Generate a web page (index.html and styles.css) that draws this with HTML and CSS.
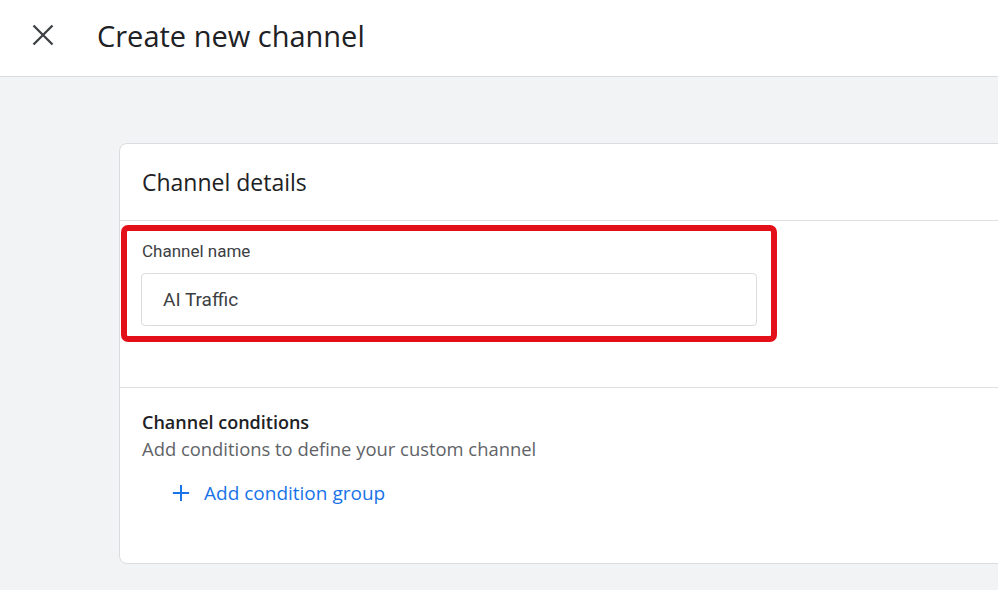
FILE: index.html
```html
<!DOCTYPE html>
<html lang="en">
<head>
    <meta charset="UTF-8">
    <meta name="viewport" content="width=device-width, initial-scale=1.0">
    <title>Create new channel</title>
    <link rel="stylesheet" href="styles.css">
</head>
<body>
    <header class="topbar">
        <button class="close-btn" aria-label="Close">
            <svg width="24" height="24" viewBox="0 0 24 24"><path d="M2.5 2.5 21.5 21.5M21.5 2.5 2.5 21.5" stroke="#3c4043" stroke-width="2.3" fill="none"/></svg>
        </button>
        <h1 class="title">Create new channel</h1>
    </header>

    <main class="content">
        <section class="card">
            <div class="card-header">Channel details</div>

            <div class="field-block">
                <div class="highlight">
                    <label for="channel-name" class="field-label">Channel name</label>
                    <div class="input-box">
                        <input type="text" id="channel-name" value="AI Traffic">
                    </div>
                </div>
            </div>

            <div class="conditions">
                <div class="cond-title">Channel conditions</div>
                <div class="cond-sub">Add conditions to define your custom channel</div>
                <button class="add-group">
                    <svg width="20" height="20" viewBox="0 0 20 20"><path d="M10 1v18M1 10h18" stroke="#1a73e8" stroke-width="2.2" fill="none"/></svg>
                    <span>Add condition group</span>
                </button>
            </div>
        </section>
    </main>
</body>
</html>
```

FILE: styles.css
```css
body {
    margin: 0;
    background-color: #f1f3f4;
    font-family: 'Roboto', 'Liberation Sans', sans-serif;
    overflow: hidden;
}

.topbar {
    height: 76px;
    background-color: #fff;
    border-bottom: 1px solid #dadce0;
    display: flex;
    align-items: center;
}

.close-btn {
    border: none;
    background: none;
    padding: 0;
    margin-left: 31px;
    margin-top: -6px;
    width: 24px;
    height: 24px;
    display: flex;
}

.close-btn svg {
    width: 24px;
    height: 24px;
}

.title {
    margin: -6px 0 0 42px;
    font-family: 'Open Sans', 'Noto Sans', sans-serif;
    font-weight: 400;
    font-size: 29px;
    color: #202124;
}

.content {
    padding: 66px 0 0 119px;
}

.card {
    width: 900px;
    background-color: #fff;
    border: 1px solid #dadce0;
    border-radius: 8px;
}

.card-header {
    height: 76px;
    display: flex;
    align-items: center;
    padding-left: 22px;
    font-family: 'Open Sans', 'Noto Sans', sans-serif;
    font-size: 23px;
    color: #202124;
    border-bottom: 1px solid #e0e0e0;
}

.field-block {
    padding: 4px 0 0 1px;
    height: 167px;
    border-bottom: 1px solid #e0e0e0;
    box-sizing: border-box;
}

.highlight {
    width: 616px;
    border: 6px solid #e3101a;
    border-radius: 7px;
    padding: 9px 14px 10px 14px;
    display: flex;
    flex-direction: column;
}

.field-label {
    font-size: 17px;
    color: #3c4043;
    padding-left: 1px;
    line-height: 22px;
    margin-bottom: 11px;
}

.input-box {
    height: 51px;
    border: 1px solid #dadce0;
    border-radius: 4px;
    display: flex;
    align-items: center;
}

.input-box input {
    border: none;
    outline: none;
    font-family: 'Roboto', sans-serif;
    font-size: 19px;
    color: #3c4043;
    padding: 0 0 0 21px;
    width: 100%;
    background: transparent;
}

.conditions {
    padding: 23px 0 0 22px;
    height: 175px;
    box-sizing: border-box;
    font-family: 'Open Sans', 'Noto Sans', sans-serif;
}

.cond-title {
    font-size: 18px;
    font-weight: 600;
    color: #202124;
    line-height: 22px;
}

.cond-sub {
    font-size: 18.4px;
    color: #5f6368;
    line-height: 24px;
    margin-top: 4px;
}

.add-group {
    border: none;
    background: none;
    padding: 0;
    margin: 19px 0 0 30px;
    display: flex;
    align-items: center;
    gap: 14px;
    font-family: 'Open Sans', 'Noto Sans', sans-serif;
    font-size: 19px;
    font-weight: 500;
    color: #1a73e8;
}

.add-group svg {
    width: 18px;
    height: 18px;
}
```
